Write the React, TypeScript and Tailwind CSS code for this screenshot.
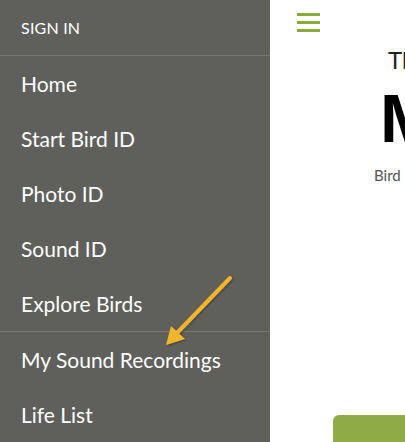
import React from "react"

const items = ["Home", "Start Bird ID", "Photo ID", "Sound ID", "Explore Birds"]

export default function App() {
  return (
    <div className="relative flex h-[442px] w-[405px] overflow-hidden bg-white" style={{ fontFamily: "Lato, 'Noto Sans', sans-serif" }}>
      <nav className="flex w-[270px] shrink-0 flex-col bg-[#5f605c] text-white">
        <div className="flex h-[56px] items-center border-b border-[#767773] pl-[21px] text-[16px] tracking-[0.2px]">SIGN IN</div>
        {items.map((t) => (
          <div key={t} className="flex h-[55px] items-center pl-[21px] text-[21px]">
            {t}
          </div>
        ))}
        <div className="flex h-[56px] items-center border-t border-[#767773] pl-[21px] text-[21px]">My Sound Recordings</div>
        <div className="flex h-[55px] items-center pl-[21px] text-[21px]">Life List</div>
      </nav>

      <main className="relative flex-1 border-r border-[#e2e2e2]">
        <div className="ml-[27px] mt-[13px] flex w-[23px] flex-col gap-[5px]">
          <span className="h-[3px] bg-[#8aab3e]" />
          <span className="h-[3px] bg-[#8aab3e]" />
          <span className="h-[3px] bg-[#8aab3e]" />
        </div>
        <div className="ml-[118px] mt-[16px] whitespace-nowrap text-[24px] leading-none text-[#222]">Th</div>
        <div className="ml-[110px] mt-[12px] whitespace-nowrap text-[68px] font-black leading-none text-black" style={{ fontFamily: "'Liberation Sans', Arial, sans-serif" }}>M</div>
        <div className="ml-[104px] mt-[16px] whitespace-nowrap text-[15px] leading-none text-[#555]">Bird I</div>
        <div className="absolute left-[63px] top-[415px] h-[40px] w-[120px] rounded-tl-[6px] bg-[#8fab47]" />
      </main>

      <svg className="pointer-events-none absolute left-0 top-0" width="405" height="442">
        <defs>
          <filter id="sh" x="-20%" y="-20%" width="140%" height="140%">
            <feDropShadow dx="1" dy="1" stdDeviation="1" floodColor="#000" floodOpacity="0.35" />
          </filter>
        </defs>
        <g filter="url(#sh)">
          <line x1="230" y1="278" x2="176" y2="334" stroke="#f2b52a" strokeWidth="4" strokeLinecap="round" />
          <polygon points="166,345 171,326 185,339" fill="#f2b52a" />
        </g>
      </svg>
    </div>
  )
}
